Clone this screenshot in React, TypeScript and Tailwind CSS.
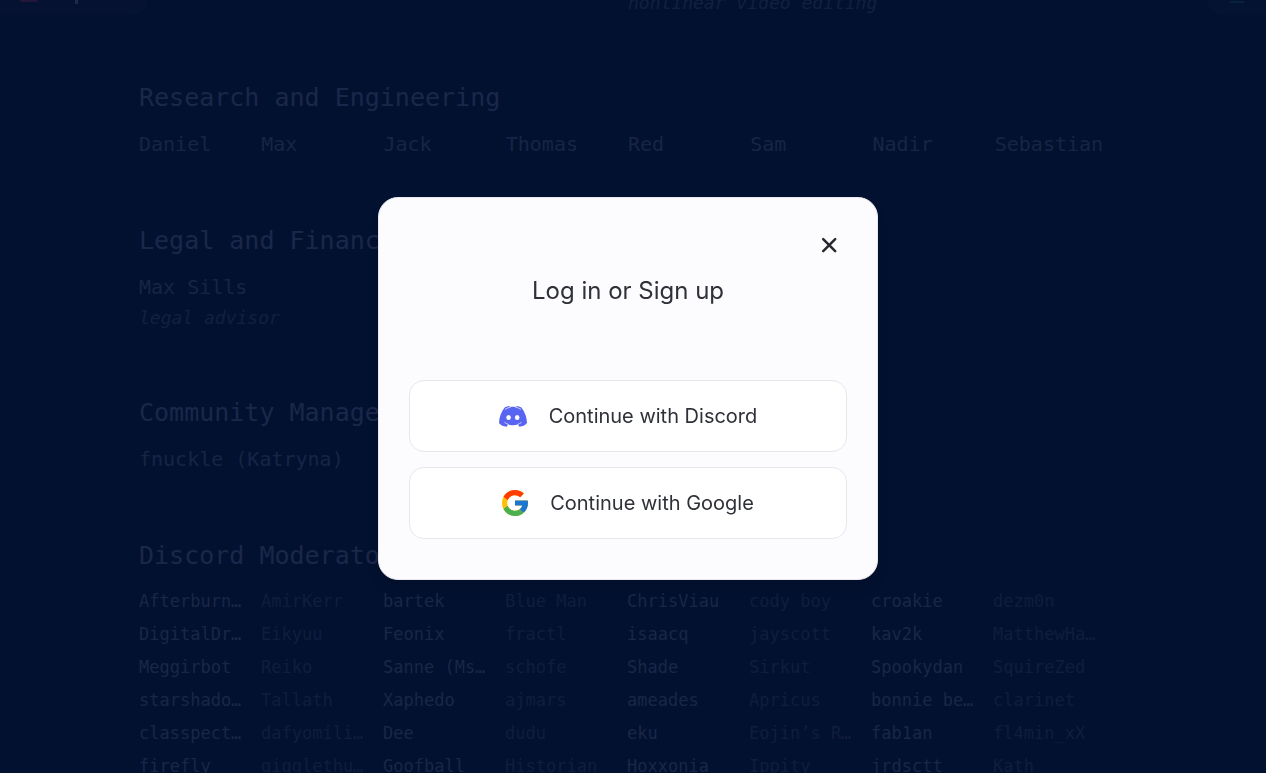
const engineers = ["Daniel", "Max", "Jack", "Thomas", "Red", "Sam", "Nadir", "Sebastian"];

const moderators = [
  "Afterburn…", "AmirKerr", "bartek", "Blue Man", "ChrisViau", "cody boy", "croakie", "dezm0n",
  "DigitalDr…", "Eikyuu", "Feonix", "fractl", "isaacq", "jayscott", "kav2k", "MatthewHa…",
  "Meggirbot", "Reiko", "Sanne (Ms…", "schofe", "Shade", "Sirkut", "Spookydan", "SquireZed",
  "starshado…", "Tallath", "Xaphedo", "ajmars", "ameades", "Apricus", "bonnie be…", "clarinet",
  "classpect…", "dafyomili…", "Dee", "dudu", "eku", "Eojin’s R…", "fab1an", "fl4min_xX",
  "firefly", "gigglethu…", "Goofball", "Historian", "Hoxxonia", "Ippity", "jrdsctt", "Kath",
];

function Section({ title, names, role }: { title: string; names: string[]; role?: string }) {
  return (
    <section className="mb-[63px]">
      <h2 className="mb-3.5 text-[25px] leading-[35px] whitespace-nowrap text-[#1b274a]">{title}</h2>
      <ul className="grid grid-cols-8 text-[20px] leading-[31px] text-[#182445]">
        {names.map((name) => (
          <li key={name} className="whitespace-nowrap">
            {name}
          </li>
        ))}
      </ul>
      {role && <p className="text-[18px] leading-[29px] text-[#13203f] italic">{role}</p>}
    </section>
  );
}

function DiscordIcon() {
  return (
    <svg className="h-[21px] w-7" viewBox="0 0 28 21" aria-hidden="true">
      <path
        fill="#5865f2"
        d="M5.6 1.6C7.2.7 8.8.2 10.3 0l.8 1c1.9-.3 3.9-.3 5.8 0l.8-1c1.5.2 3.1.7 4.7 1.6C25.8 6 27.9 11.300 28 17c-1.700 2.300-4.500 3.500-7.600 3.700l-1.500-2.100c-3.200.8-6.600.8-9.800 0l-1.500 2.100C4.500 20.500 1.700 19.300 0 17 .1 11.300 2.200 6 5.600 1.600Z"
      />
      <path
        fill="none"
        stroke="#fff"
        strokeWidth="0.7"
        strokeLinecap="round"
        d="M6.300 3.200C7.800 2.200 9.400 1.600 11.200 1.300M21.700 3.200c-1.500-1-3.100-1.600-4.900-1.900M5.800 16.600c1.100.8 2.200 1.400 3.500 1.800M22.200 16.600c-1.100.8-2.200 1.400-3.500 1.800"
      />
      <ellipse cx="9.600" cy="11.400" rx="2.300" ry="2.500" fill="#fff" />
      <ellipse cx="18.200" cy="11.400" rx="2.300" ry="2.500" fill="#fff" />
    </svg>
  );
}

function GoogleIcon() {
  return (
    <svg className="size-[26px]" viewBox="4 4 40 40" aria-hidden="true">
      <path fill="#ffc107" d="M43.611 20.083H42V20H24v8h11.303c-1.649 4.657-6.08 8-11.303 8-6.627 0-12-5.373-12-12s5.373-12 12-12c3.059 0 5.842 1.154 7.961 3.039l5.657-5.657C34.046 6.053 29.268 4 24 4 12.955 4 4 12.955 4 24s8.955 20 20 20 20-8.955 20-20c0-1.341-.138-2.65-.389-3.917z" />
      <path fill="#ff3d00" d="m6.306 14.691 6.571 4.819C14.655 15.108 18.961 12 24 12c3.059 0 5.842 1.154 7.961 3.039l5.657-5.657C34.046 6.053 29.268 4 24 4 16.318 4 9.656 8.337 6.306 14.691z" />
      <path fill="#4caf50" d="M24 44c5.166 0 9.86-1.977 13.409-5.192l-6.19-5.238A11.91 11.91 0 0 1 24 36c-5.202 0-9.619-3.317-11.283-7.946l-6.522 5.025C9.505 39.556 16.227 44 24 44z" />
      <path fill="#1976d2" d="M43.611 20.083H42V20H24v8h11.303a12.04 12.04 0 0 1-4.087 5.571l6.193 5.238C36.971 39.205 44 34 44 24c0-1.341-.138-2.65-.389-3.917z" />
    </svg>
  );
}

function LoginModal() {
  return (
    <div
      role="dialog"
      aria-modal="true"
      aria-labelledby="login-title"
      className="w-full max-w-[500px] rounded-[20px] border border-[#e9e9f0] bg-[#fcfcff] px-[30px] pt-[29px] pb-10 font-['Inter',sans-serif] text-[#2f3138] shadow-lg"
    >
      <div className="flex justify-end">
        <button type="button" aria-label="Close" className="flex size-9 items-center justify-center">
          <svg className="size-4" viewBox="0 0 16 16" fill="none" stroke="#27292f" strokeWidth="2.5" strokeLinecap="round">
            <path d="M2.200 2.200l12 12M14.200 2.200l-12 12" />
          </svg>
        </button>
      </div>
      <h1 id="login-title" className="mt-2.5 mb-[71px] text-center text-[24px] leading-9">
        Log in or Sign up
      </h1>
      <div className="flex flex-col gap-[15px] text-[20px]">
        <button type="button" className="flex h-[72px] items-center justify-center gap-[22px] rounded-[15px] border border-[#e6e7ec] bg-white">
          <DiscordIcon />
          Continue with Discord
        </button>
        <button type="button" className="flex h-[72px] items-center justify-center gap-[22px] rounded-[15px] border border-[#e6e7ec] bg-white">
          <GoogleIcon />
          Continue with Google
        </button>
      </div>
    </div>
  );
}

export default function App() {
  return (
    <div className="h-screen overflow-hidden bg-[#031130] pr-2.5 font-['DejaVu_Sans_Mono',monospace]">
      <main className="mx-auto -mt-3 max-w-[978px]">
        <div className="mb-[63px] grid grid-cols-8 text-[18px] leading-[29px] text-[#13203f] italic">
          <p className="col-start-5 whitespace-nowrap">nonlinear video editing</p>
        </div>
        <Section title="Research and Engineering" names={engineers} />
        <Section title="Legal and Finance" names={["Max Sills"]} role="legal advisor" />
        <Section title="Community Management" names={["fnuckle (Katryna)"]} />
        <section>
          <h2 className="mb-3 text-[25px] leading-[35px] whitespace-nowrap text-[#1b274a]">Discord Moderators</h2>
          <ul className="mr-0.5 grid grid-cols-8 text-[17px] leading-[33px]">
            {moderators.map((name) => (
              <li key={name} className="whitespace-nowrap text-[#111d3d] odd:text-[#1a2648]">
                {name}
              </li>
            ))}
          </ul>
        </section>
      </main>

      {/* floating bars, mostly scrolled out of view */}
      <div className="fixed top-0 left-0 flex h-[15px] w-[148px] rounded-br-2xl bg-[#051231] pl-5">
        <span className="h-0.5 w-[18px] rounded-b bg-[#24153a]" />
        <span className="ml-[37px] h-1 w-[3px] bg-[#1f2a48]" />
      </div>
      <div className="fixed top-0 right-0 flex h-[15px] w-[59px] rounded-bl-2xl bg-[#031331] pl-[23px]">
        <span className="h-[3px] w-[14px] border-b-2 border-[#06233c]" />
      </div>

      <div className="fixed inset-0 flex items-center justify-center pt-1 pr-2.5">
        <LoginModal />
      </div>
    </div>
  );
}
